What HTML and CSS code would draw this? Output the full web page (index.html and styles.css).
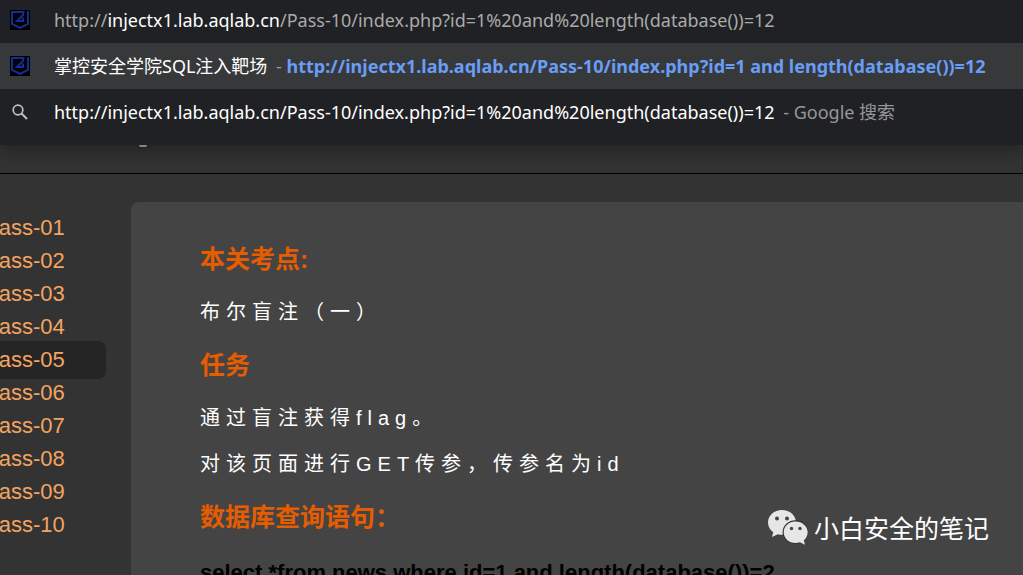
FILE: index.html
```html
<!DOCTYPE html>
<html lang="zh-CN">
<head>
    <meta charset="UTF-8">
    <meta name="viewport" content="width=device-width, initial-scale=1.0">
    <title>掌控安全学院SQL注入靶场</title>
    <link rel="stylesheet" href="styles.css">
</head>
<body>

    <ul class="suggestions">
        <li>
            <a class="suggestion" href="#">
                <svg class="site-icon" viewBox="0 0 20 20" aria-hidden="true">
                    <rect width="20" height="20" fill="#000"/>
                    <path d="M14.500 2H2V14L10 18L18 14V1M13 2.500V5L7 11H13V7.500" fill="none" stroke="#142c96" stroke-width="2"/>
                </svg>
                <span class="dim">http://<span class="host">injectx1.lab.aqlab.cn</span>/Pass-10/index.php?id=1%20and%20length(database())=12</span>
            </a>
        </li>
        <li>
            <a class="suggestion selected" href="#">
                <svg class="site-icon" viewBox="0 0 20 20" aria-hidden="true">
                    <rect width="20" height="20" fill="#000"/>
                    <path d="M14.500 2H2V14L10 18L18 14V1M13 2.500V5L7 11H13V7.500" fill="none" stroke="#142c96" stroke-width="2"/>
                </svg>
                <span>掌控安全学院SQL注入靶场<span class="note"> - </span><span class="url">http://injectx1.lab.aqlab.cn/Pass-10/index.php?id=1 and length(database())=12</span></span>
            </a>
        </li>
        <li>
            <a class="suggestion" href="#">
                <svg class="site-icon" viewBox="0 0 20 20" aria-hidden="true">
                    <circle cx="8" cy="8" r="4.8" fill="none" stroke="#bdc1c6" stroke-width="1.7"/>
                    <path d="M11.5 11.5L17 17" stroke="#bdc1c6" stroke-width="2"/>
                </svg>
                <span>http://injectx1.lab.aqlab.cn/Pass-10/index.php?id=1%20and%20length(database())=12<span class="note"> - Google 搜索</span></span>
            </a>
        </li>
    </ul>

    <header class="header">
        <span class="logo-tail"></span>
    </header>

    <div class="page">
        <nav class="sidebar">
            <ul>
                <li><a href="#">Pass-01</a></li>
                <li><a href="#">Pass-02</a></li>
                <li><a href="#">Pass-03</a></li>
                <li><a href="#">Pass-04</a></li>
                <li><a class="current" href="#">Pass-05</a></li>
                <li><a href="#">Pass-06</a></li>
                <li><a href="#">Pass-07</a></li>
                <li><a href="#">Pass-08</a></li>
                <li><a href="#">Pass-09</a></li>
                <li><a href="#">Pass-10</a></li>
            </ul>
        </nav>

        <main class="content">
            <h2>本关考点:</h2>
            <p>布尔盲注（一）</p>
            <h2>任务</h2>
            <p>通过盲注获得flag。</p>
            <p>对该页面进行GET传参，传参名为id</p>
            <h2>数据库查询语句：</h2>
            <h3>select *from news where id=1 and length(database())=2</h3>
        </main>
    </div>

    <div class="watermark">
        <svg class="wechat" viewBox="0 0 40 35" aria-hidden="true">
            <path d="M14 0C6.300 0 0 5.300 0 12.500C0 16.500 2 19.800 5.200 22.200L4 27L9.800 24.200C11.200 24.600 12.600 24.800 14 24.800C21.700 24.800 28 19.500 28 12.500C28 5.300 21.700 0 14 0Z" fill="#e6e6e6"/>
            <ellipse cx="27.500" cy="22.200" rx="12.900" ry="11.900" fill="#333"/>
            <path d="M27.500 11.400C20.900 11.400 15.700 16.200 15.700 22.200C15.700 28.200 20.900 33 27.500 33C29 33 30.600 32.700 32 32.200L37 34.700L35.800 30.300C38.300 28.200 39.700 25.400 39.700 22.200C39.700 16.200 34.200 11.400 27.500 11.400Z" fill="#e6e6e6"/>
            <g fill="#444">
                <circle cx="9" cy="8.500" r="2"/>
                <circle cx="19" cy="8.500" r="2"/>
                <circle cx="23.500" cy="18.500" r="1.700"/>
                <circle cx="32" cy="18.500" r="1.700"/>
            </g>
        </svg>
        <span>小白安全的笔记</span>
    </div>

</body>
</html>
```

FILE: styles.css
```css
* {
    box-sizing: border-box;
}
body {
    margin: 0;
    height: 100vh;
    overflow: hidden;
    display: flex;
    flex-direction: column;
    background-color: #333;
    color: white;
    font-family: Arial, "Liberation Sans", "Noto Sans CJK SC", sans-serif;
}
ul {
    list-style: none;
    margin: 0;
    padding: 0;
}
a {
    text-decoration: none;
}
h2, h3, p {
    margin: 0;
}

/* address bar suggestions */
.suggestions {
    position: relative;
    z-index: 1;
    flex: none;
    margin-top: -3px;
    padding-bottom: 10px;
    background-color: #202124;
    box-shadow: 0 4px 20px rgba(0, 0, 0, 0.4);
}
.suggestion {
    display: flex;
    align-items: center;
    gap: 24px;
    height: 46px;
    padding-left: 10px;
    color: white;
    font: 18px/26px "Noto Sans", "Noto Sans CJK SC", sans-serif;
    white-space: pre;
}
.selected {
    background-color: #37383a;
}
.site-icon {
    flex: none;
    width: 20px;
    height: 20px;
}
.dim {
    color: #aaa;
}
.host {
    color: white;
}
.note {
    margin-left: 4px;
    color: #969799;
}
.url {
    color: #699df6;
    font-weight: bold;
}

.header {
    flex: none;
    height: 29px;
    padding-left: 139px;
    border-bottom: 1px solid black;
}
.logo-tail {
    display: block;
    width: 8px;
    height: 2px;
    background-color: #888;
    border-radius: 0 0 4px 4px;
    position: relative;
    z-index: 2;
}

.page {
    flex: 1;
    display: flex;
    gap: 25px;
    padding-top: 28px;
    min-height: 0;
}
.sidebar {
    flex: none;
    width: 106px;
    padding-top: 9px;
}
.sidebar li {
    display: flex;
    align-items: center;
    height: 33px;
}
.sidebar a {
    flex: 1;
    margin-left: -16px;
    border-radius: 8px;
    color: #f4a460;
    font-size: 22px;
    line-height: 38px;
}
.sidebar .current {
    background-color: #252525;
}
.content {
    flex: 1;
    display: flex;
    flex-direction: column;
    gap: 20px;
    padding: 37px 0 0 69px;
    background-color: #444;
    border-radius: 8px 0 0 0;
    white-space: nowrap;
}
.content h2 {
    color: #e65c00;
    font-size: 25px;
    line-height: 40px;
}
.content p {
    font-size: 20px;
    line-height: 26px;
    letter-spacing: 6px;
}
.content h3 {
    color: black;
    font-size: 22px;
    line-height: 32px;
}

.watermark {
    position: absolute;
    right: 34px;
    bottom: 30px;
    display: flex;
    align-items: center;
    gap: 6px;
    font: 25px/36px "Noto Sans CJK SC", sans-serif;
}
.wechat {
    width: 40px;
    height: 35px;
}
```
